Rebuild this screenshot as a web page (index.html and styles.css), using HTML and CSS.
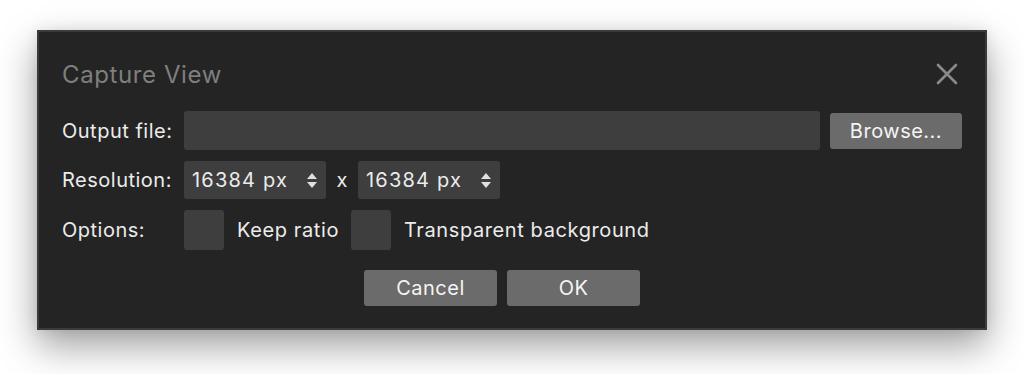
FILE: index.html
```html
<!DOCTYPE html>
<html lang="en">
<head>
  <meta charset="UTF-8">
  <title>Capture View</title>
  <link rel="stylesheet" href="styles.css">
</head>
<body>
<div class="dialog">
  <div class="dialog-header">
    <h1 class="dialog-title">Capture View</h1>
    <button class="close-btn" aria-label="Close">
      <svg width="22" height="22" viewBox="0 0 22 22">
        <path d="M2 2 L20 20 M20 2 L2 20" stroke="#8a8a8a" stroke-width="2.6" stroke-linecap="round"/>
      </svg>
    </button>
  </div>

  <div class="form">
    <div class="label row-output">Output file:</div>
    <div class="field-row row-output">
      <input class="text-input" type="text">
      <button class="btn btn-browse">Browse...</button>
    </div>

    <div class="label row-res">Resolution:</div>
    <div class="field-row row-res">
      <div class="spinbox">
        <span>16384 px</span>
        <span class="arrows"><i class="up"></i><i class="down"></i></span>
      </div>
      <span class="times">x</span>
      <div class="spinbox">
        <span>16384 px</span>
        <span class="arrows"><i class="up"></i><i class="down"></i></span>
      </div>
    </div>

    <div class="label row-opt">Options:</div>
    <div class="field-row row-opt">
      <span class="checkbox"></span>
      <span class="check-label">Keep ratio</span>
      <span class="checkbox"></span>
      <span class="check-label">Transparent background</span>
    </div>
  </div>

  <div class="actions">
    <button class="btn btn-action">Cancel</button>
    <button class="btn btn-action">OK</button>
  </div>
</div>
</body>
</html>
```

FILE: styles.css
```css
* {
  box-sizing: border-box;
}

html, body {
  height: 100%;
}

body {
  margin: 0;
  padding: 30px 37px 0;
  background: #ffffff;
  font-family: Inter, 'Liberation Sans', sans-serif;
  color: #ececec;
}

.dialog {
  width: 950px;
  height: 300px;
  background: #242424;
  border: 2px solid #3b3b3b;
  padding: 22px 23px 22px;
  box-shadow: 0 16px 36px rgba(0, 0, 0, 0.38), 0 0 12px rgba(0, 0, 0, 0.08);
}

.dialog-header {
  display: flex;
  align-items: center;
  justify-content: space-between;
  height: 40px;
  margin-bottom: 17px;
}

.dialog-title {
  margin: 0;
  font-size: 24px;
  font-weight: 400;
  letter-spacing: 0.6px;
  color: #7f7f7f;
}

.close-btn {
  background: none;
  border: none;
  padding: 0;
  margin-right: 4px;
  width: 22px;
  height: 22px;
  display: flex;
}

.form {
  display: grid;
  grid-template-columns: 122px 1fr;
  row-gap: 11px;
  align-items: center;
}

.label {
  display: flex;
  align-items: center;
  font-size: 20px;
  letter-spacing: 0.5px;
}

.field-row {
  display: flex;
  align-items: center;
}

.row-output { height: 39px; }
.row-res { height: 38px; }
.row-opt { height: 40px; }

.text-input {
  flex: 1;
  height: 39px;
  background: #3e3e3e;
  border: none;
  border-radius: 3px;
  margin-right: 10px;
}

.btn {
  background: #6b6b6b;
  color: #f4f4f4;
  border: none;
  border-radius: 3px;
  font-family: inherit;
  font-size: 20px;
  letter-spacing: 0.5px;
}

.btn-browse {
  width: 132px;
  height: 36px;
}

.spinbox {
  width: 142px;
  height: 38px;
  background: #3e3e3e;
  border-radius: 3px;
  display: flex;
  align-items: center;
  justify-content: space-between;
  padding: 0 8px 0 8px;
  font-size: 20px;
  letter-spacing: 1.2px;
}

.arrows {
  display: flex;
  flex-direction: column;
  gap: 3px;
  margin-right: 1px;
}

.arrows i {
  width: 0;
  height: 0;
  border-left: 5px solid transparent;
  border-right: 5px solid transparent;
}

.arrows .up {
  border-bottom: 6px solid #e0e0e0;
}

.arrows .down {
  border-top: 6px solid #e0e0e0;
}

.times {
  font-size: 20px;
  width: 32px;
  text-align: center;
}

.checkbox {
  width: 40px;
  height: 40px;
  background: #3e3e3e;
  border-radius: 3px;
}

.check-label {
  font-size: 20px;
  letter-spacing: 0.6px;
  margin: 0 12px 0 13px;
}

.actions {
  display: flex;
  justify-content: center;
  gap: 10px;
  margin-top: 20px;
  padding-right: 20px;
}

.btn-action {
  width: 133px;
  height: 36px;
}
```
